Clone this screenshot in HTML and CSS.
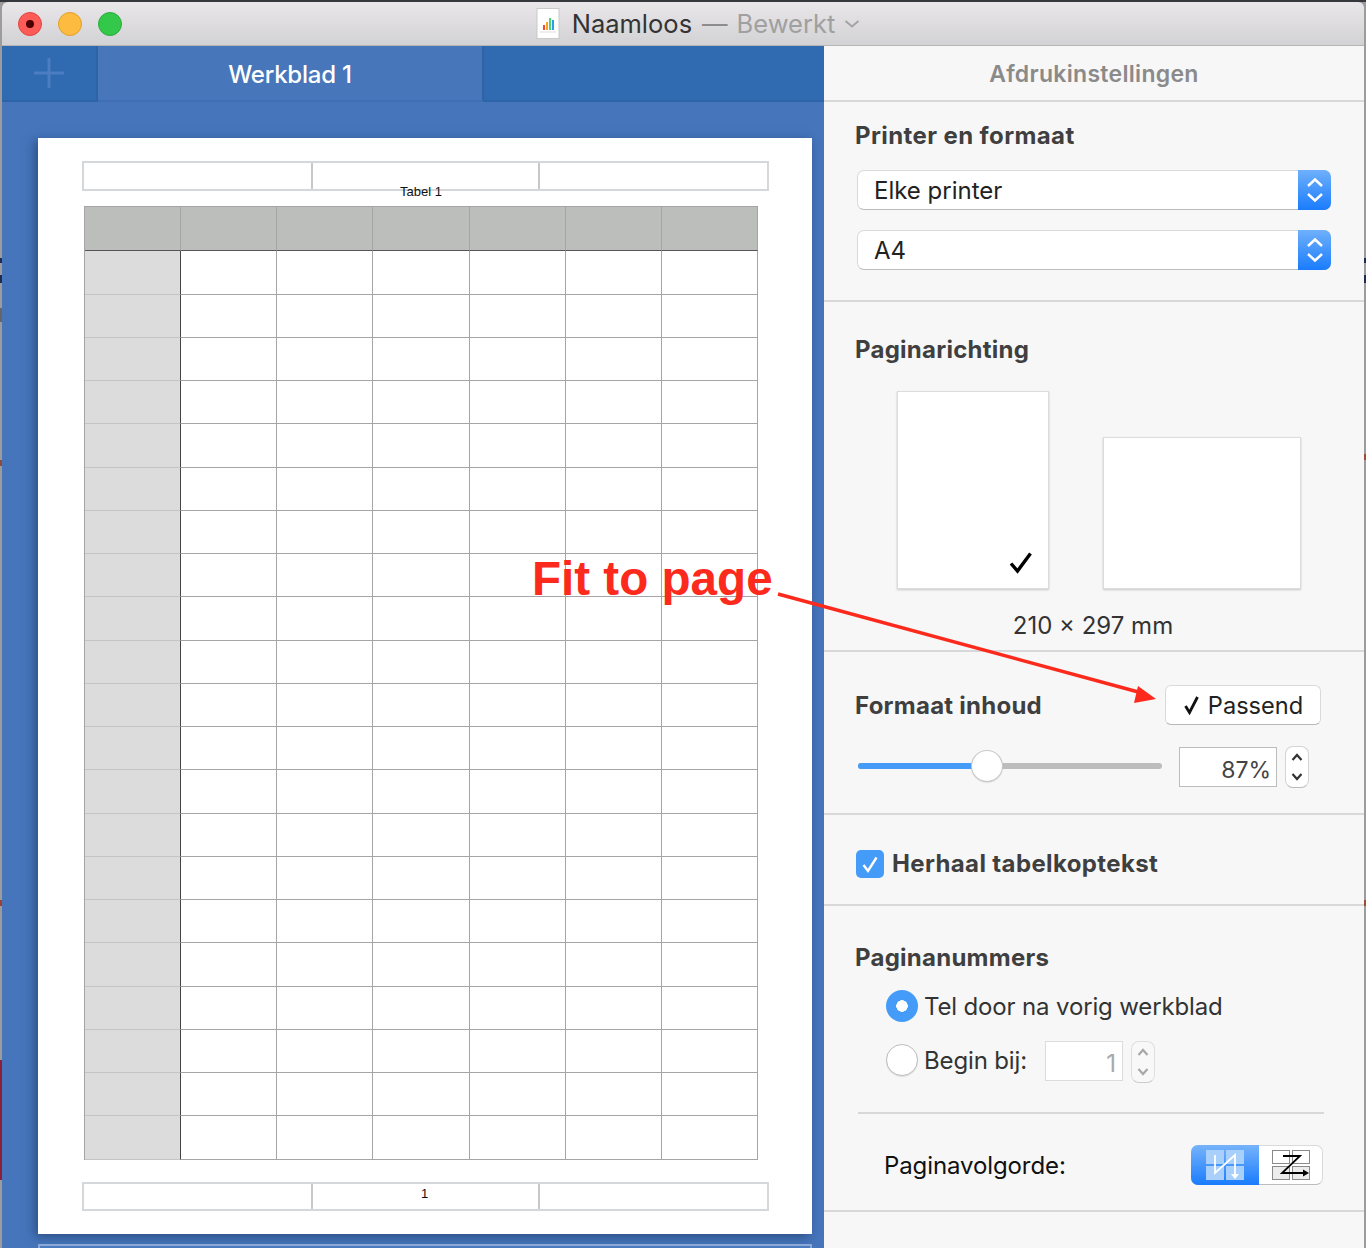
FILE: index.html
```html
<!DOCTYPE html>
<html lang="nl">
<head>
<meta charset="utf-8">
<title>Naamloos</title>
<link rel="stylesheet" href="styles.css">
</head>
<body>
<div class="window">
  <header class="titlebar">
    <div class="lights">
      <span class="light red"><span class="dot"></span></span>
      <span class="light yellow"></span>
      <span class="light green"></span>
    </div>
    <div class="title">
      <svg class="docicon" width="24" height="31" viewBox="0 0 24 31">
        <rect x="1" y="0.5" width="22" height="30" fill="#fff" stroke="#c9c9c9"/>
        <rect x="7" y="17" width="2" height="5" fill="#f0483e"/>
        <rect x="10" y="14" width="2" height="8" fill="#f5a623"/>
        <rect x="13" y="10" width="2" height="12" fill="#4cd964"/>
        <rect x="16" y="12" width="2" height="10" fill="#2d9cf0"/>
        <rect x="4" y="23.5" width="16" height="1" fill="#ddd"/>
      </svg>
      <span class="name">Naamloos</span>
      <span class="dash">—</span>
      <span class="edited">Bewerkt</span>
      <svg class="chev" width="16" height="10" viewBox="0 0 16 10"><path d="M1.5 2 L8 7.5 L14.5 2" fill="none" stroke="#a5a4a5" stroke-width="2"/></svg>
    </div>
  </header>

  <div class="content">
    <main class="preview">
      <div class="tabs">
        <div class="addtab">
          <svg width="32" height="32" viewBox="0 0 32 32"><path d="M16 1V31M1 16H31" stroke="#4a7dc1" stroke-width="3"/></svg>
        </div>
        <div class="tab">Werkblad 1</div>
        <div class="tabrest"></div>
      </div>
      <div class="stage">
        <div class="sheet">
          <div class="hf head">
            <div class="hfcell"></div>
            <div class="hfcell"><span class="tabletitle">Tabel 1</span></div>
            <div class="hfcell"></div>
          </div>
          <div class="grid">
            <i class="hc"></i><i class="hc"></i><i class="hc"></i><i class="hc"></i><i class="hc"></i><i class="hc"></i><i class="hc"></i>
            <i class="st"></i><i></i><i></i><i></i><i></i><i></i><i></i>
            <i class="st"></i><i></i><i></i><i></i><i></i><i></i><i></i>
            <i class="st"></i><i></i><i></i><i></i><i></i><i></i><i></i>
            <i class="st"></i><i></i><i></i><i></i><i></i><i></i><i></i>
            <i class="st"></i><i></i><i></i><i></i><i></i><i></i><i></i>
            <i class="st"></i><i></i><i></i><i></i><i></i><i></i><i></i>
            <i class="st"></i><i></i><i></i><i></i><i></i><i></i><i></i>
            <i class="st"></i><i></i><i></i><i></i><i></i><i></i><i></i>
            <i class="st"></i><i></i><i></i><i></i><i></i><i></i><i></i>
            <i class="st"></i><i></i><i></i><i></i><i></i><i></i><i></i>
            <i class="st"></i><i></i><i></i><i></i><i></i><i></i><i></i>
            <i class="st"></i><i></i><i></i><i></i><i></i><i></i><i></i>
            <i class="st"></i><i></i><i></i><i></i><i></i><i></i><i></i>
            <i class="st"></i><i></i><i></i><i></i><i></i><i></i><i></i>
            <i class="st"></i><i></i><i></i><i></i><i></i><i></i><i></i>
            <i class="st"></i><i></i><i></i><i></i><i></i><i></i><i></i>
            <i class="st"></i><i></i><i></i><i></i><i></i><i></i><i></i>
            <i class="st"></i><i></i><i></i><i></i><i></i><i></i><i></i>
            <i class="st"></i><i></i><i></i><i></i><i></i><i></i><i></i>
            <i class="st"></i><i></i><i></i><i></i><i></i><i></i><i></i>
            <i class="st"></i><i></i><i></i><i></i><i></i><i></i><i></i>
          </div>
          <div class="hf foot">
            <div class="hfcell"></div>
            <div class="hfcell"><span class="pageno">1</span></div>
            <div class="hfcell"></div>
          </div>
        </div>
        <div class="nextsheet"></div>
      </div>
    </main>

    <aside class="panel">
      <div class="panelhead">Afdrukinstellingen</div>

      <section class="sec printer">
        <h2>Printer en formaat</h2>
        <div class="select"><span>Elke printer</span><b class="selbtn"><svg width="20" height="30" viewBox="0 0 20 30"><path d="M3 11 L10 4.5 L17 11M3 19 L10 25.5 L17 19" fill="none" stroke="#fff" stroke-width="2.4"/></svg></b></div>
        <div class="select"><span>A4</span><b class="selbtn"><svg width="20" height="30" viewBox="0 0 20 30"><path d="M3 11 L10 4.5 L17 11M3 19 L10 25.5 L17 19" fill="none" stroke="#fff" stroke-width="2.4"/></svg></b></div>
      </section>

      <section class="sec orient">
        <h2>Paginarichting</h2>
        <div class="pages">
          <div class="page portrait">
            <svg width="24" height="24" viewBox="0 0 24 24"><path d="M2 12.5 L8.5 20 L21.5 2.5" fill="none" stroke="#000" stroke-width="3.4"/></svg>
          </div>
          <div class="page landscape"></div>
        </div>
        <p class="size">210 × 297 mm</p>
      </section>

      <section class="sec scale">
        <div class="scalerow">
          <h2>Formaat inhoud</h2>
          <div class="fitbtn"><svg width="18" height="20" viewBox="0 0 18 20"><path d="M2.500 11 L6.500 17.500 L14.500 2" fill="none" stroke="#111" stroke-width="2.800"/></svg><span>Passend</span></div>
        </div>
        <div class="sliderrow">
          <div class="slider"><div class="fill"></div><div class="thumb"></div></div>
          <div class="numfield pct">87%</div>
          <div class="stepper"><svg width="14" height="34" viewBox="0 0 14 34"><path d="M2.500 10 L7 5 L11.500 10M2.500 24 L7 29 L11.500 24" fill="none" stroke="#333" stroke-width="2.200"/></svg></div>
        </div>
      </section>

      <section class="sec repeat">
        <span class="check"><svg width="20" height="20" viewBox="0 0 20 20"><path d="M3.500 11 L8 17 L16.500 3.500" fill="none" stroke="#fff" stroke-width="2.400"/></svg></span>
        <span class="repeatlabel">Herhaal tabelkoptekst</span>
      </section>

      <section class="sec numbers">
        <h2>Paginanummers</h2>
        <div class="radiorow first"><span class="radio on"></span><span>Tel door na vorig werkblad</span></div>
        <div class="radiorow second"><span class="radio"></span><span>Begin bij:</span>
          <div class="numfield dim">1</div>
          <div class="stepper dimstep"><svg width="14" height="34" viewBox="0 0 14 34"><path d="M2.500 10 L7 5 L11.500 10M2.500 24 L7 29 L11.500 24" fill="none" stroke="#a8a8a8" stroke-width="2.200"/></svg></div>
        </div>
        <div class="divider"></div>
        <div class="orderrow">
          <span class="orderlabel">Paginavolgorde:</span>
          <div class="segment">
            <div class="seg active">
              <svg width="40" height="32" viewBox="0 0 40 32">
                <g fill="#a9d0fb"><rect x="1" y="1" width="18" height="14"/><rect x="21" y="1" width="18" height="14"/><rect x="1" y="17" width="18" height="14"/><rect x="21" y="17" width="18" height="14"/></g>
                <path d="M10 6 V24 L30 6 V26" fill="none" stroke="#fff" stroke-width="1.800"/>
                <path d="M26 25 H34 L30 30 Z" fill="#fff"/>
              </svg>
            </div>
            <div class="seg">
              <svg width="40" height="32" viewBox="0 0 40 32">
                <g fill="#fff" stroke="#8a8a8a"><rect x="1.500" y="1.500" width="17" height="13"/><rect x="21.500" y="1.500" width="17" height="13"/></g>
                <g fill="#ececec" stroke="#8a8a8a"><rect x="1.500" y="17.500" width="17" height="13"/><rect x="21.500" y="17.500" width="17" height="13"/></g>
                <path d="M12 7 H29 L11 24 H33" fill="none" stroke="#000" stroke-width="1.800"/>
                <path d="M32 20.500 L38 24 L32 27.500 Z" fill="#000"/>
              </svg>
            </div>
          </div>
        </div>
      </section>
    </aside>
  </div>
</div>

<div class="fitnote">Fit to page</div>
<svg class="fitarrow" width="400" height="130" viewBox="0 0 400 130">
  <path d="M8 9 L372 108" fill="none" stroke="#fc2a1c" stroke-width="3.500"/>
  <path d="M386 114 L368 101 L364 118 Z" fill="#fc2a1c"/>
</svg>
</body>
</html>
```

FILE: styles.css
```css
* { box-sizing: border-box; }
html, body { margin: 0; height: 100%; }
body {
  width: 1366px;
  height: 1248px;
  overflow: hidden;
  position: relative;
  background-color: #9c9c9c;
  background-image:
    linear-gradient(#34373c, #34373c),
    linear-gradient(#9c9c9c 258px, #1d2c50 258px 263px, #9c9c9c 263px 275px, #1d2c50 275px 283px, #9c9c9c 283px 308px, #666 308px 322px, #9c9c9c 322px 460px, #8f4a3a 460px 466px, #9c9c9c 466px 900px, #a04030 900px 906px, #9c9c9c 906px 1060px, #8a1f3a 1060px 1180px, #9c9c9c 1180px),
    linear-gradient(#9c9c9c 258px, #1d2c50 258px 263px, #9c9c9c 263px 275px, #1d2c50 275px 283px, #9c9c9c 283px 454px, #a04a38 454px 460px, #9c9c9c 460px 900px, #a04a38 900px 906px, #9c9c9c 906px);
  background-size: 100% 2px, 2px 100%, 2px 100%;
  background-position: 0 0, 0 0, 100% 0;
  background-repeat: no-repeat;
  padding: 2px 2px 0 2px;
  font-family: Inter, "Noto Sans", "Liberation Sans", sans-serif;
  color: #333;
}
.window {
  width: 1362px;
  height: 1246px;
  display: flex;
  flex-direction: column;
  border-radius: 6px 6px 0 0;
  overflow: hidden;
}
.titlebar {
  height: 44px;
  flex: none;
  position: relative;
  display: flex;
  justify-content: center;
  align-items: center;
  background: linear-gradient(#e9e7ea, #d2d1d3);
  border-bottom: 1px solid #b5b5b5;
}
.lights {
  position: absolute;
  left: 16px;
  top: 10px;
  display: flex;
  gap: 16px;
}
.light {
  width: 24px;
  height: 24px;
  border-radius: 50%;
  display: flex;
  align-items: center;
  justify-content: center;
}
.red { background: #fc5b57; border: 1px solid #e2463f; }
.yellow { background: #fdbc40; border: 1px solid #e0a12c; }
.green { background: #34c84a; border: 1px solid #2aac3a; }
.dot { width: 8px; height: 8px; border-radius: 50%; background: #4d0000; }
.title {
  display: flex;
  align-items: center;
  font-size: 25.5px;
  margin-left: 30px;
}
.docicon { margin-right: 12px; }
.name { color: #333; }
.dash { color: #8e8d8e; margin: 0 9px 0 10px; }
.edited { color: #a0a0a0; }
.chev { margin-left: 9px; }

.content { flex: 1; display: flex; min-height: 0; }

.preview {
  width: 822px;
  flex: none;
  background: #4675bb;
  display: flex;
  flex-direction: column;
}
.tabs { height: 56px; flex: none; display: flex; background: #306bb2; border-bottom: 2px solid #2d64a8; }
.addtab {
  width: 96px;
  display: flex;
  align-items: center;
  justify-content: center;
  border-right: 2px solid #2d64a8;
}
.tab {
  width: 386px;
  background: #4776ba;
  border-right: 2px solid #2d64a8;
  margin-bottom: -2px;
  border-bottom: 2px solid #3f6eb2;
  color: #fff;
  font-size: 24px;
  font-weight: 500;
  letter-spacing: -0.2px;
  display: flex;
  align-items: center;
  justify-content: center;
  padding-top: 2px;
}
.tabrest { flex: 1; }
.stage { flex: 1; padding: 36px 12px 0 36px; overflow: hidden; }
.sheet {
  width: 774px;
  height: 1096px;
  background: #fff;
  box-shadow: -3px 3px 10px rgba(20, 45, 85, 0.55);
  padding: 23px 44px 0 45px;
}
.nextsheet {
  width: 774px;
  height: 20px;
  margin-top: 10px;
  background: #4a7abf;
  border: 2px solid #8ba8d6;
}
.hf {
  display: grid;
  grid-template-columns: 229px 227px 1fr;
  height: 30px;
  width: 687px;
  margin-left: -1px;
  border: 2px solid #d5d8da;
  font-family: "Liberation Sans", Arial, sans-serif;
  font-size: 13px;
  color: #111;
}
.hfcell { position: relative; border-right: 2px solid #c6c8ca; }
.hfcell:last-child { border-right: 0; }
.tabletitle { position: absolute; left: 87px; top: 21px; white-space: nowrap; line-height: 15px; }
.pageno { position: absolute; left: 108px; top: 2px; line-height: 15px; }
.foot { margin-top: 22px; height: 29px; }

.grid {
  display: grid;
  grid-template-columns: 96px 96px 96px 97px 96px 96px 96px;
  grid-template-rows: 44px 44px 43px 43px 43px 44px 43px 43px 43px 44px 43px 43px 43px 44px 43px 43px 43px 44px 43px 43px 43px 44px;
  width: 674px;
  margin: 15px 0 0 1px;
  border-top: 1px solid #a5a5a5;
  border-left: 1px solid #a5a5a5;
}
.grid i { display: block; border-right: 1px solid #a5a5a5; border-bottom: 1px solid #a5a5a5; }
.grid .hc { background: #bcbebc; border-bottom-color: #555; }
.grid .st { background: #dcdcdc; border-right-color: #444; border-bottom-color: #c4c4c4; }

.panel {
  flex: 1;
  background: #f7f7f7;
  display: flex;
  flex-direction: column;
}
.panelhead {
  height: 56px;
  flex: none;
  border-bottom: 2px solid #d8d8d8;
  display: flex;
  align-items: center;
  justify-content: center;
  color: #8a8a8a;
  font-size: 23px;
  font-weight: 600;
  letter-spacing: 0.3px;
  padding-top: 1px;
}
.sec { border-bottom: 2px solid #d8d8d8; padding: 0 33px 0 31px; flex: none; }
h2 { margin: 0; font-size: 24px; font-weight: 700; color: #3f3f3f; line-height: 30px; letter-spacing: 0.25px; }

.printer { height: 200px; padding-top: 19px; }
.printer h2 { letter-spacing: 0.4px; margin-bottom: -1px; }
.select {
  margin: 20px 0 0 2px;
  width: 474px;
  height: 40px;
  background: #fff;
  border-radius: 7px;
  border: 1px solid #dadada;
  border-bottom-color: #bcbcbc;
  display: flex;
  justify-content: space-between;
  align-items: center;
  font-size: 24px;
  color: #222;
  padding-left: 16px;
}
.select + .select { margin-top: 20px; }
.selbtn {
  width: 33px;
  height: 40px;
  margin-right: -1px;
  border-radius: 0 7px 7px 0;
  background: linear-gradient(#6fb0fb, #1a7cfd);
  display: flex;
  align-items: center;
  justify-content: center;
}

.orient { height: 350px; padding-top: 33px; }
.pages { display: flex; align-items: flex-end; margin: 26px 0 0 42px; gap: 54px; }
.page { background: #fff; border: 1px solid #dcdcdc; box-shadow: 0 1px 2px rgba(0, 0, 0, 0.2); }
.portrait { width: 152px; height: 198px; display: flex; align-items: flex-end; justify-content: flex-end; padding: 0 15px 13px 0; }
.landscape { width: 198px; height: 152px; }
.size { margin: 22px 0 0; text-align: center; font-size: 24px; color: #333; line-height: 30px; }

.scale { height: 163px; padding-top: 33px; }
.scalerow { display: flex; justify-content: space-between; align-items: center; height: 40px; margin-right: 10px; }
.scalerow h2 { padding-top: 1px; }
.fitbtn {
  width: 156px;
  height: 40px;
  background: #fff;
  border-radius: 6px;
  border: 1px solid #dadada;
  border-bottom-color: #b8b8b8;
  display: flex;
  align-items: center;
  justify-content: center;
  gap: 7px;
  font-size: 23.6px;
  color: #222;
}
.sliderrow { display: flex; align-items: center; margin: 22px 0 0 3px; height: 40px; }
.slider { position: relative; width: 304px; height: 6px; background: #bdbdbd; border-radius: 3px; margin: -2px 17px 0 0; }
.fill { position: absolute; left: 0; top: 0; bottom: 0; width: 118px; background: #459cf8; border-radius: 3px; }
.thumb {
  position: absolute;
  left: 114px;
  top: -12px;
  width: 30px;
  height: 30px;
  border-radius: 50%;
  background: #fff;
  box-shadow: 0 0 0 1px #c8c8c8, 0 1px 2px rgba(0, 0, 0, 0.3);
}
.numfield {
  width: 98px;
  height: 40px;
  background: #fff;
  border: 1px solid #bcbcbc;
  text-align: right;
  font-size: 24px;
  color: #444;
  line-height: 44px;
  padding-right: 6px;
  flex: none;
}
.pct { font-size: 23px; padding-right: 5px; }
.stepper {
  width: 24px;
  height: 42px;
  margin-left: 8px;
  background: #fff;
  border-radius: 8px;
  border: 1px solid #d4d4d4;
  border-bottom-color: #bbb;
  display: flex;
  align-items: center;
  justify-content: center;
  flex: none;
}

.repeat { height: 91px; display: flex; align-items: center; gap: 8px; padding-left: 32px; padding-top: 9px; }
.check {
  width: 28px;
  height: 28px;
  border-radius: 5px;
  background: #459cf8;
  display: flex;
  align-items: center;
  justify-content: center;
  flex: none;
}
.repeatlabel { font-size: 24px; font-weight: 700; color: #3f3f3f; letter-spacing: 0.37px; margin-bottom: 2px; }

.numbers { height: 306px; padding-top: 37px; }
.radiorow { display: flex; align-items: center; font-size: 24px; color: #333; padding-left: 31px; gap: 6px; letter-spacing: -0.15px; }
.first { height: 32px; margin-top: 17px; }
.second { height: 40px; margin-top: 18px; }
.radio {
  width: 32px;
  height: 32px;
  border-radius: 50%;
  background: #fff;
  border: 1px solid #bdbdbd;
  flex: none;
  box-shadow: 0 1px 1px rgba(0, 0, 0, 0.1);
}
.radio.on { background: radial-gradient(circle, #fff 0 5.500px, #459cf8 6px); border: 0; box-shadow: none; }
.dim { width: 78px; margin: 2px 0 0 12px; color: #a8a8a8; border-color: #dcdcdc; }
.dimstep { margin: 4px 0 0 2px; border-color: #dfdfdf; border-bottom-color: #ccc; background: #f8f8f8; }
.divider { height: 2px; background: #d8d8d8; margin: 32px 7px 0 3px; }
.orderrow { display: flex; align-items: center; justify-content: space-between; margin: 31px 8px 0 29px; height: 40px; }
.orderlabel { font-size: 24px; color: #111; letter-spacing: -0.1px; }
.segment {
  display: flex;
  width: 132px;
  height: 40px;
  border-radius: 7px;
  background: #fff;
  border: 1px solid #dadada;
  border-bottom-color: #bcbcbc;
}
.seg { display: flex; align-items: center; justify-content: center; flex: 1; }
.seg.active {
  flex: none;
  width: 68px;
  margin: -1px 0 -1px -1px;
  border-radius: 7px 0 0 7px;
  background: linear-gradient(#76b3fb, #1a7cfd);
}

.fitnote {
  position: absolute;
  left: 532px;
  top: 550px;
  font-family: "Liberation Sans", Arial, sans-serif;
  font-weight: 700;
  font-size: 47.6px;
  line-height: 58px;
  color: #fc2a1c;
  white-space: nowrap;
}
.fitarrow { position: absolute; left: 770px; top: 585px; }
```
